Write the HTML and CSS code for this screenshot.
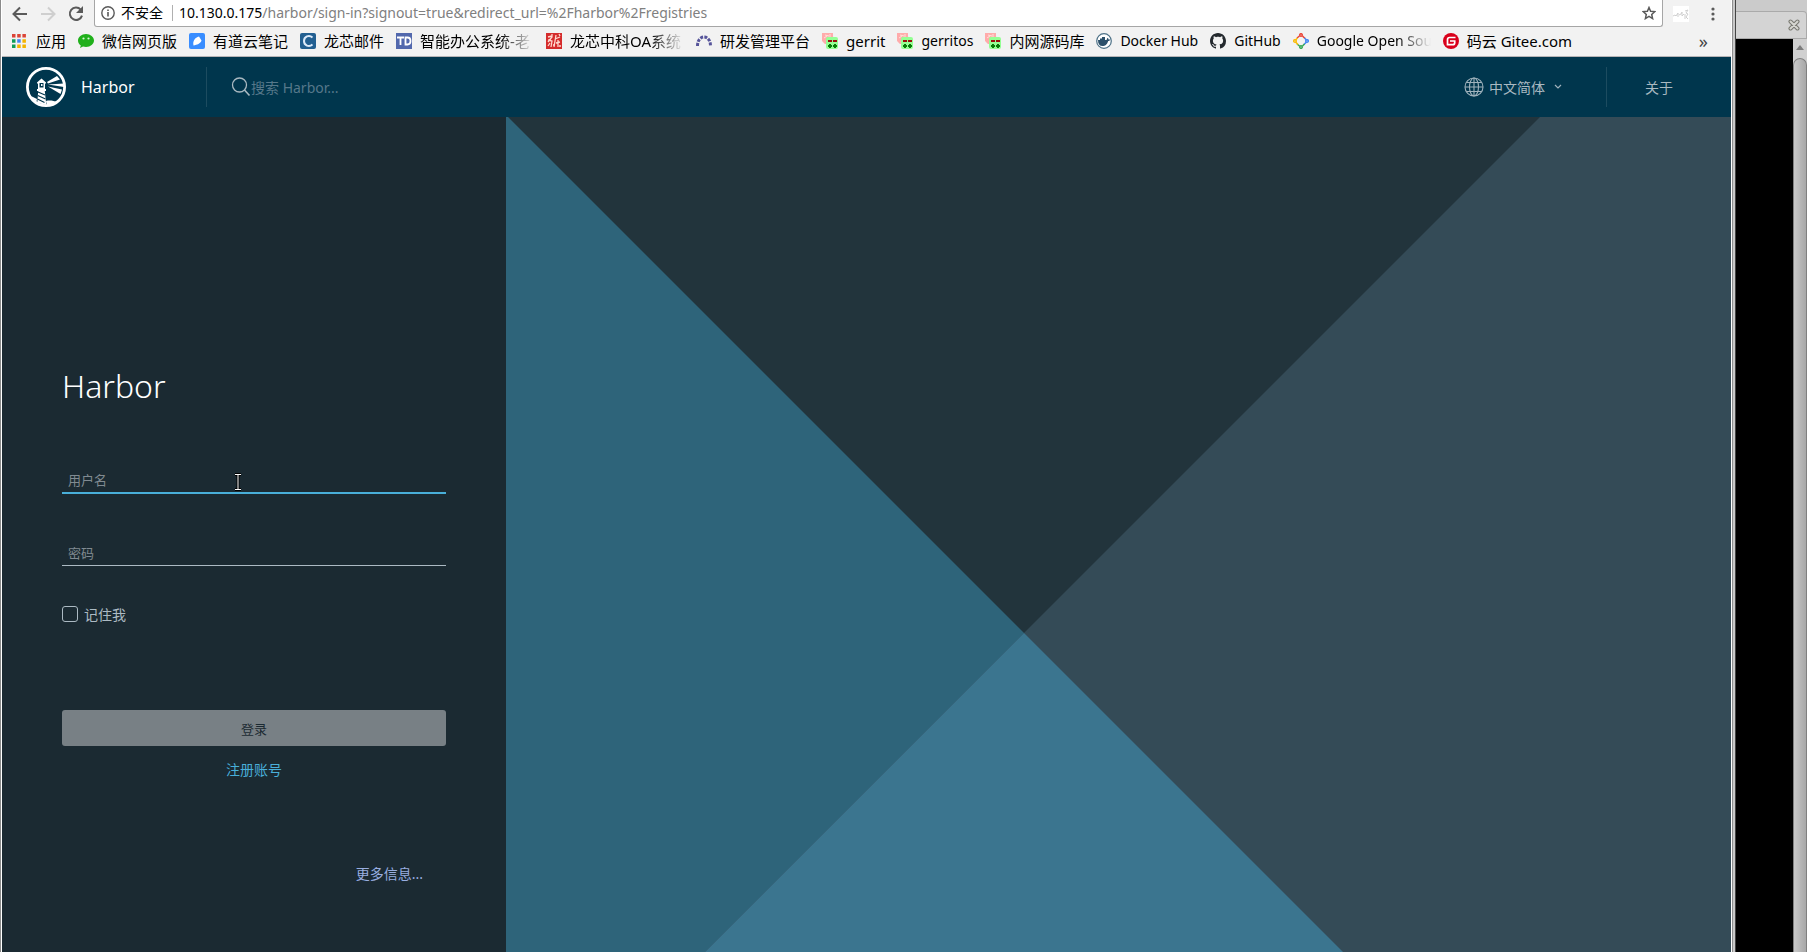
FILE: index.html
```html
<!DOCTYPE html>
<html lang="zh-CN">
<head>
<meta charset="utf-8">
<title>Harbor</title>
<link rel="stylesheet" href="styles.css">
</head>
<body>
<div class="desktop">
<div class="window">
  <div class="toolbar">
    <button class="tool back" aria-label="后退"><svg width="16" height="16" viewBox="0 0 16 16"><path d="M15 8H2M8 1.500L1.500 8L8 14.500" fill="none" stroke="#5a5a5a" stroke-width="2"/></svg></button>
    <button class="tool forward" aria-label="前进"><svg width="16" height="16" viewBox="0 0 16 16"><path d="M1 8h13M8 1.500L14.500 8L8 14.500" fill="none" stroke="#cfcfcf" stroke-width="2"/></svg></button>
    <button class="tool reload" aria-label="重新加载"><svg width="16" height="16" viewBox="0 0 16 16"><path d="M12.700 3.600A6.200 6.200 0 1 0 14 9.600" fill="none" stroke="#5a5a5a" stroke-width="2"/><path d="M15 0v7H8z" fill="#5a5a5a"/></svg></button>
    <div class="omnibox">
      <svg width="14" height="14" viewBox="0 0 14 14"><circle cx="7" cy="7" r="6.200" fill="none" stroke="#5a5a5a" stroke-width="1.400"/><path d="M6.200 6h1.600v4.500H6.200zM6.200 3.400h1.600V5H6.200z" fill="#5a5a5a"/></svg>
      <span class="security">不安全</span>
      <span class="address"><b>10.130.0.175</b>/harbor/sign-in?signout=true&amp;redirect_url=%2Fharbor%2Fregistries</span>
      <svg width="14" height="14" viewBox="0 0 14 14"><path d="M7 1.500l1.600 3.700 4.200.400-3.100 2.800.900 4.200L7 10.400l-3.600 2.200.900-4.200L1.200 5.600l4.200-.400z" fill="none" stroke="#5a5a5a" stroke-width="1.500"/></svg>
    </div>
    <svg class="extension" width="16" height="16" viewBox="0 0 16 16"><path fill="#fff" d="M0 0h16v16H0z"/><path d="M0 10l2-1 1 1 2-3v4M6 9l2-1 1-2v4l2-2M12 5l3-1-2 3 2 1-2 3 2 2M12 8v5" fill="none" stroke="#cfcfcf"/></svg>
    <button class="tool more" aria-label="菜单"><svg width="4" height="14" viewBox="0 0 4 14"><g fill="#5a5a5a"><circle cx="2" cy="2" r="1.600"/><circle cx="2" cy="7" r="1.600"/><circle cx="2" cy="12" r="1.600"/></g></svg></button>
  </div>
  <nav class="bookmarks">
    <a href="#"><svg class="apps" width="14" height="14" viewBox="0 0 14 14"><path fill="#db4437" d="M0 0h3.500v3.500H0zM5.200 0h3.500v3.500H5.200zM10.400 0h3.500v3.500h-3.500z"/><path fill="#0f9d58" d="M0 5.200h3.500v3.500H0zM0 10.400h3.500v3.500H0z"/><path fill="#4285f4" d="M5.200 5.200h3.500v3.500H5.200z"/><path fill="#f4b400" d="M10.400 5.200h3.500v3.500h-3.500zM5.200 10.400h3.500v3.500H5.200zM10.400 10.400h3.500v3.500h-3.500z"/></svg><span>应用</span></a>
    <a href="#"><svg width="16" height="16" viewBox="0 0 16 16"><path d="M8 1C3.500 1 0 4 0 7.500c0 2 1 3.700 2.800 5L2 15l3-1.500c1 .300 2 .500 3 .500 4.500 0 8-3 8-6.500S12.500 1 8 1z" fill="#20b01b"/><circle cx="5.500" cy="5.500" r="1.100" fill="#d9f5d5"/><circle cx="10.500" cy="5.500" r="1.100" fill="#d9f5d5"/></svg><span>微信网页版</span></a>
    <a href="#"><svg width="16" height="16" viewBox="0 0 16 16"><rect width="16" height="16" rx="2" fill="#398dff"/><path d="M4.500 12.500C3.500 8 6 4.500 10 3.500l2.500 4C11.500 11 8 11.500 4.500 12.500z" fill="#fff"/></svg><span>有道云笔记</span></a>
    <a href="#"><svg width="16" height="16" viewBox="0 0 16 16"><rect width="16" height="16" rx="2" fill="#225f91"/><path d="M12.500 4.500C9 1.500 4 3.500 4 8s5 6.500 8.500 3.500" fill="none" stroke="#dceafa" stroke-width="2"/></svg><span>龙芯邮件</span></a>
    <a href="#"><svg width="16" height="16" viewBox="0 0 16 16"><path fill="#5268ad" d="M0 0h16v16H0z"/><path d="M1 4.500h7M4.500 4v8M9.500 4.500v7h2c4 0 4-7 0-7z" fill="none" stroke="#fff" stroke-width="1.800"/></svg><span class="faded">智能办公系统-老</span></a>
    <a href="#"><svg width="16" height="16" viewBox="0 0 16 16"><path fill="#d52c2c" d="M0 0h16v16H0z"/><path d="M2 4l4-1M6 1v3L2 9M2 7l4 1-1 6M2 13l2-3M7 12h2M10 2L9 8l-1 6M9 6l5-2M12 7v7M10 10l4-1M13 13h2M13 1l1 2" fill="none" stroke="#ffd9cf" stroke-width="1.300"/></svg><span class="faded">龙芯中科OA系统</span></a>
    <a href="#"><svg width="16" height="16" viewBox="0 0 16 16"><path d="M1.500 13C1.500 1 14.500 1 14.500 13" fill="none" stroke="#56549a" stroke-width="3" stroke-dasharray="3 1.200"/></svg><span>研发管理平台</span></a>
    <a href="#"><svg width="16" height="16" viewBox="0 0 16 16"><path fill="#ffabab" d="M0 0h11v3l1 8H3L0 8z"/><path d="M3 2l4 1M8 1v4M2 5l3-2" stroke="#ffe2da" fill="none"/><rect x="4" y="4" width="12" height="12" rx="2" fill="#94ff94"/><path fill="#990e0e" d="M6 7h4v2H6zM11 7h4v2h-4z"/><path fill="#087a08" d="M7 11h2v1h1v2H9v1H7v-1H6v-2h1zM12 11h2v1h1v2h-1v1h-2v-1h-1v-2h1z"/></svg><span>gerrit</span></a>
    <a href="#"><svg width="16" height="16" viewBox="0 0 16 16"><path fill="#ffabab" d="M0 0h11v3l1 8H3L0 8z"/><path d="M3 2l4 1M8 1v4M2 5l3-2" stroke="#ffe2da" fill="none"/><rect x="4" y="4" width="12" height="12" rx="2" fill="#94ff94"/><path fill="#990e0e" d="M6 7h4v2H6zM11 7h4v2h-4z"/><path fill="#087a08" d="M7 11h2v1h1v2H9v1H7v-1H6v-2h1zM12 11h2v1h1v2h-1v1h-2v-1h-1v-2h1z"/></svg><span class="latin">gerritos</span></a>
    <a href="#"><svg width="16" height="16" viewBox="0 0 16 16"><path fill="#ffabab" d="M0 0h11v3l1 8H3L0 8z"/><path d="M3 2l4 1M8 1v4M2 5l3-2" stroke="#ffe2da" fill="none"/><rect x="4" y="4" width="12" height="12" rx="2" fill="#94ff94"/><path fill="#990e0e" d="M6 7h4v2H6zM11 7h4v2h-4z"/><path fill="#087a08" d="M7 11h2v1h1v2H9v1H7v-1H6v-2h1zM12 11h2v1h1v2h-1v1h-2v-1h-1v-2h1z"/></svg><span>内网源码库</span></a>
    <a href="#"><svg width="16" height="16" viewBox="0 0 16 16"><circle cx="8" cy="8" r="7.300" fill="#fff" stroke="#4d7187" stroke-width="1.200"/><path d="M2 7h2V5.500h2V4h3v3h1.500c.500-.500.300-1.500 1-2.300.800.500 1 1.200 1 1.800.700-.200 1.300 0 1.700.300-.400.900-1.200 1.200-2 1.200C11 12 9 13 6.500 13 3.500 13 2 11 2 7z" fill="#2c506a"/></svg><span class="latin">Docker Hub</span></a>
    <a href="#"><svg width="16" height="16" viewBox="0 0 16 16"><path fill="#24292e" d="M8 0C3.580 0 0 3.580 0 8c0 3.540 2.290 6.530 5.470 7.590.400.070.550-.170.550-.380 0-.190-.010-.820-.010-1.490-2.010.370-2.530-.490-2.690-.940-.090-.230-.480-.940-.820-1.130-.280-.150-.680-.520-.010-.530.630-.010 1.080.580 1.230.820.720 1.210 1.870.870 2.330.660.070-.520.280-.870.510-1.070-1.780-.200-3.640-.890-3.640-3.950 0-.870.310-1.590.820-2.150-.080-.200-.360-1.020.080-2.120 0 0 .670-.210 2.200.820.640-.180 1.320-.270 2-.270s1.360.090 2 .270c1.530-1.040 2.200-.820 2.200-.820.440 1.100.160 1.920.080 2.120.510.560.820 1.270.820 2.150 0 3.070-1.870 3.750-3.650 3.950.290.250.540.730.540 1.480 0 1.070-.010 1.930-.010 2.200 0 .210.150.460.550.380A8.010 8.010 0 0 0 16 8c0-4.420-3.580-8-8-8z"/></svg><span class="latin">GitHub</span></a>
    <a href="#"><svg width="16" height="16" viewBox="0 0 16 16"><g fill="none" stroke-width="1.500"><path d="M4 5l2.500-2M9.500 3L12 5.500" stroke="#ea4335"/><circle cx="8" cy="2" r="1.300" stroke="#ea4335"/><path d="M11.500 5l2 2M13.500 9L11 11.500" stroke="#4285f4"/><circle cx="14" cy="8" r="1.300" stroke="#4285f4"/><path d="M11.500 11l-2 2M6.500 13L4 11" stroke="#34a853"/><circle cx="8" cy="14" r="1.300" stroke="#34a853"/><path d="M4.500 5L2.500 7M2.500 9L5 11.500" stroke="#fbbc05"/><circle cx="2" cy="8" r="1.300" stroke="#fbbc05"/></g></svg><span class="latin faded">Google Open Sou</span></a>
    <a href="#"><svg width="16" height="16" viewBox="0 0 16 16"><circle cx="8" cy="8" r="8" fill="#d9001b"/><path d="M12.500 4.500H6.700C5.300 4.500 4.500 5.300 4.500 6.700v5h5.200c1.200 0 2-.800 2-2V8H7" fill="none" stroke="#fff" stroke-width="1.700"/></svg><span>码云 Gitee.com</span></a>
    <button class="overflow" aria-label="更多书签">»</button>
  </nav>
  <header class="header">
    <a class="brand" href="#"><svg width="40" height="40" viewBox="0 0 40 40"><circle cx="20" cy="20" r="18.600" fill="none" stroke="#fff" stroke-width="2.800"/><path d="M11 15.500l4.500-4 4.500 4v1h-1V22h1v2h-1.200l1.500 14-9-2L12.200 24H11v-2h1v-5.500h-1z" fill="#fff"/><path d="M13.500 16h4v4.500h-4z" fill="#00364d"/><path d="M15 17h1.500v2H15z" fill="#fff"/><path d="M12 25l7 3M11.800 28.500l7.700 3.500M11.500 32l7 3.500" stroke="#00364d" stroke-width="1.200"/><path d="M21 15L31 9l3 3.500-12 4zM22 17.500l16-1v3.500zM22 19.500l14 3-1.500 4.500z" fill="#fff"/><path d="M5 29l6 3-1 5zM20 34c4-1 8 0 11 1l-10 4z" fill="#fff"/></svg><span>Harbor</span></a>
    <label class="search"><svg width="20" height="20" viewBox="0 0 20 20"><circle cx="8.500" cy="8" r="7" fill="none" stroke="#a9b9c1" stroke-width="1.300"/><path d="M13.500 13l5 5.500" stroke="#a9b9c1" stroke-width="1.600"/></svg><input type="search" placeholder="搜索 Harbor..." aria-label="搜索 Harbor"></label>
    <button class="language"><svg width="20" height="20" viewBox="0 0 20 20"><g fill="none" stroke="#9fb2bc" stroke-width="1.100"><circle cx="10" cy="10" r="9"/><ellipse cx="10" cy="10" rx="4.500" ry="9"/><path d="M10 1v18M1 10h18M2.500 5.500h15M2.500 14.500h15"/></g></svg><span>中文简体</span><svg width="8" height="8" viewBox="0 0 8 8"><path d="M1 2l3 3 3-3" fill="none" stroke="#9fb2bc" stroke-width="1.200"/></svg></button>
    <a class="about" href="#">关于</a>
  </header>
  <main class="page">
    <form class="login">
      <h1>Harbor</h1>
      <div class="field"><input class="active" type="text" placeholder="用户名" aria-label="用户名"><svg class="cursor" width="8" height="18" viewBox="0 0 8 18"><path d="M1 1.500h6M1 16.500h6M4 1v16" fill="none" stroke="#000" stroke-width="3"/><path d="M1 1.500h6M1 16.500h6M4 1v16" fill="none" stroke="#fff" stroke-width="1"/></svg></div>
      <div class="field"><input type="password" placeholder="密码" aria-label="密码"></div>
      <label class="remember"><input type="checkbox"><span>记住我</span></label>
      <button class="submit" type="button">登录</button>
      <a class="signup" href="#">注册账号</a>
      <a class="info" href="#">更多信息...</a>
    </form>
    <svg class="art" viewBox="0 0 1225 835" preserveAspectRatio="xMinYMin slice"><path fill="#22343c" d="M0 0h1225v835H0z"/><path fill="#2e647a" d="M2 0l835 835H0V0z"/><path fill="#344b57" d="M1034 0h191v835H199z"/><path fill="#3b758f" d="M518 516l319 319H199z"/></svg>
  </main>
</div>
<aside class="behind">
  <div class="tabstrip"><div class="tab"><svg width="12" height="12" viewBox="0 0 12 12"><path d="M2.500 2.500l7 7M9.500 2.500l-7 7" stroke="#77776f" stroke-width="4" stroke-linecap="round"/><path d="M2.500 2.500l7 7M9.500 2.500l-7 7" stroke="#d6d6d0" stroke-width="2" stroke-linecap="round"/></svg></div></div>
  <div class="terminal"><div class="scrollbar"><svg width="14" height="19" viewBox="0 0 14 19"><path d="M7 6l4 5H3z" fill="#7d7d7d"/></svg><div class="thumb"></div></div></div>
</aside>
</div>
</body>
</html>
```
FILE: styles.css
```css
* { box-sizing: border-box; }
body { margin: 0; background: #000; font-family: "Noto Sans", "Noto Sans CJK SC", sans-serif; }
button { padding: 0; border: 0; background: none; font-family: inherit; }
a { color: inherit; text-decoration: none; }
svg { display: block; flex: none; }
input { font-family: inherit; min-width: 0; }

.desktop { display: flex; height: 100vh; overflow: hidden; }
.window { flex: 1; min-width: 0; display: flex; flex-direction: column; background: #f2f2f2; border-left: 1px solid #8a8a8a; border-right: 1px solid #444; box-shadow: inset 1px 0 #fff; padding: 0 4px 0 1px; background-image: linear-gradient(to left, #c8c8c8 2px, #8f8f8f 2px, #8f8f8f 3px, #fff 3px, #fff 4px, transparent 4px); }

.toolbar { flex: none; height: 27px; display: flex; align-items: center; padding: 0 16px 0 10px; }
.tool { display: flex; }
.forward { margin-left: 12px; }
.reload { margin-left: 12px; }
.omnibox { flex: 1; height: 27px; display: flex; align-items: center; margin: 0 10px 0 10px; padding: 0 6px; background: #fff; border: 1px solid #a6a6a6; border-top: 0; border-radius: 0 0 3px 3px; font-size: 14px; line-height: 20px; }
.security { margin-left: 6px; padding-right: 9px; border-right: 1px solid #b0b0b0; line-height: 16px; }
.address { flex: 1; margin-left: 6px; color: #808080; white-space: nowrap; }
.address b { color: #000; font-weight: 400; }
.more { margin-left: 22px; }

.bookmarks { flex: none; height: 30px; display: flex; align-items: center; gap: 12px; padding: 0 23px 2px 10px; border-bottom: 1px solid #b6b4b6; font-size: 15px; line-height: 20px; white-space: nowrap; color: #000; }
.bookmarks a { display: flex; align-items: center; gap: 8px; }
.latin { font-size: 14px; }
.apps { margin-right: 2px; }
.faded { width: 114px; overflow: hidden; -webkit-mask-image: linear-gradient(to right, #000 80px, transparent); mask-image: linear-gradient(to right, #000 80px, transparent); }
.overflow { margin-left: auto; font-size: 18px; line-height: 20px; color: #444; }

.header { flex: none; height: 60px; display: flex; align-items: center; background: #00364d; color: #a9b9c1; font-size: 14px; }
.brand { display: flex; align-items: center; gap: 15px; width: 205px; height: 40px; padding-left: 24px; border-right: 1px solid #1d4c60; color: #fff; font-size: 16px; }
.search { flex: 1; display: flex; align-items: center; margin-left: 24px; }
.search input { width: 240px; padding: 0; border: 0; background: none; color: #fff; font-size: 14px; outline: 0; }
.search input::placeholder { color: #56788a; opacity: 1; }
.language { display: flex; align-items: center; color: #a9b9c1; font-size: 14px; gap: 5px; margin-right: 44px; }
.language svg:last-child { margin-left: 4px; }
.about { display: flex; align-items: center; height: 40px; padding: 0 58px 0 38px; border-left: 1px solid #1d4c60; }

.page { flex: 1; min-height: 0; display: flex; }
.login { flex: none; width: 504px; padding: 247px 60px 0; background: #1b2a32; display: flex; flex-direction: column; color: #acbac3; font-size: 14px; }
.login h1 { margin: 0 0 60px; color: #fff; font: 300 32px/44px "Noto Sans", sans-serif; }
.field { display: flex; height: 72px; align-items: flex-start; position: relative; }
.field + .remember { margin-top: -8px; }
.field input { flex: 1; height: 26px; padding: 0 6px; border: 0; border-bottom: 1px solid #acbac3; background: none; color: #fff; font-size: 13px; outline: 0; }
.field .active { border-bottom: 2px solid #49afd9; }
.field input::placeholder { color: #808a91; opacity: 1; }
.cursor { position: absolute; left: 172px; top: 5px; }
.remember { display: flex; align-items: center; gap: 6px; height: 20px; }
.remember input { appearance: none; width: 16px; height: 16px; margin: 0; border: 1px solid #acbac3; border-radius: 3px; }
.submit { height: 36px; margin-top: 86px; border-radius: 3px; background: #788085; color: #1b2a32; font-size: 13px; }
.signup { align-self: center; margin-top: 14px; line-height: 20px; color: #49afd9; }
.info { align-self: flex-end; margin: 84px 23px 0 0; line-height: 20px; color: #99aee0; }
.art { flex: 1; min-width: 0; width: 0; height: 100%; }

.behind { flex: none; width: 71px; display: flex; flex-direction: column; }
.tabstrip { flex: none; height: 39px; padding-top: 11px; background: #cbcbcb; }
.tab { height: 28px; display: flex; align-items: center; justify-content: flex-end; padding-right: 6px; background: #d4d4d4; border: 1px solid #aaa; border-left: 0; border-radius: 0 4px 0 0; }
.terminal { flex: 1; display: flex; justify-content: flex-end; background: #000; }
.scrollbar { width: 14px; display: flex; flex-direction: column; background: #d0d0d0; }
.thumb { flex: 1; border: 1px solid #808080; border-bottom: 0; border-radius: 7px 7px 0 0; background: linear-gradient(to right, #c8c8c8, #a8a8a8); }
```
